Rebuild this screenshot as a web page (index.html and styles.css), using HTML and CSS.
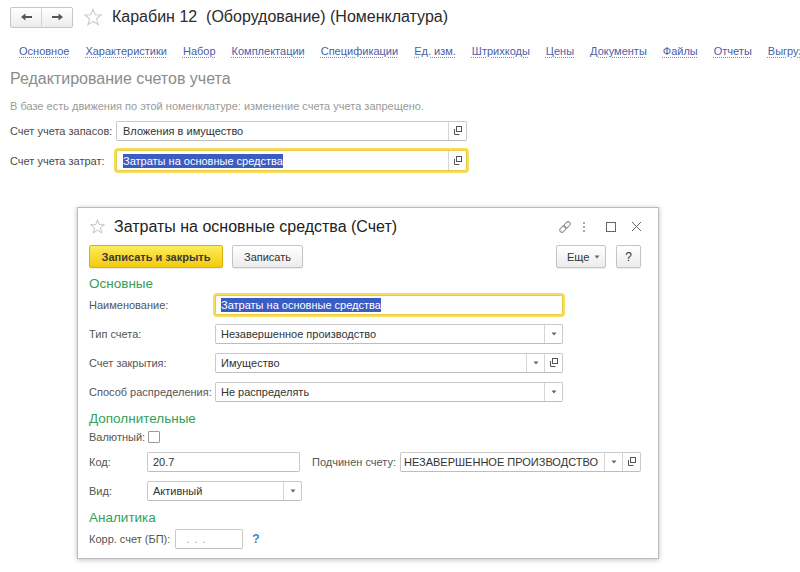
FILE: index.html
```html
<!DOCTYPE html>
<html lang="ru">
<head>
<meta charset="utf-8">
<title>Карабин 12</title>
<link rel="stylesheet" href="styles.css">
</head>
<body>
<div class="page">
  <header class="header">
    <div class="navbtns">
      <span class="navbtn"><svg width="11" height="8" viewBox="0 0 11 8"><path d="M0 4 L4.5 0.5 V3 H11 V5 H4.5 V7.5 Z" fill="#555"/></svg></span>
      <span class="navbtn"><svg width="11" height="8" viewBox="0 0 11 8"><path d="M11 4 L6.5 0.5 V3 H0 V5 H6.5 V7.5 Z" fill="#555"/></svg></span>
    </div>
    <svg class="star big" width="18" height="18" viewBox="0 0 16 16"><polygon points="8,1 9.9,6 15.3,6.2 11.1,9.6 12.6,14.9 8,11.9 3.4,14.9 4.9,9.6 0.7,6.2 6.1,6" fill="none" stroke="#c9c9c9" stroke-width="0.9"/></svg>
    <h1 class="title">Карабин 12&nbsp; (Оборудование) (Номенклатура)</h1>
  </header>

  <nav class="tabs">
    <a>Основное</a><a>Характеристики</a><a>Набор</a><a>Комплектации</a><a>Спецификации</a><a>Ед. изм.</a><a>Штрихкоды</a><a>Цены</a><a>Документы</a><a>Файлы</a><a>Отчеты</a><a>Выгрузка</a>
  </nav>

  <h2 class="section">Редактирование счетов учета</h2>
  <p class="note">В базе есть движения по этой номенклатуре: изменение счета учета запрещено.</p>

  <div class="topform">
    <div class="trow">
      <label class="tlabel">Счет учета запасов:</label>
      <div class="field tfield">
        <span class="val">Вложения в имущество</span>
        <span class="fbtn"><svg class="ico-open" width="10" height="10" viewBox="0 0 10 10"><rect x="3.5" y="0.5" width="5" height="5" fill="none" stroke="#555"/><path d="M1.5 3 V8.5 H6.5" fill="none" stroke="#555"/></svg></span>
      </div>
    </div>
    <div class="trow r2">
      <label class="tlabel">Счет учета затрат:</label>
      <div class="field tfield focus">
        <span class="val"><span class="sel">Затраты на основные средства</span></span>
        <span class="fbtn"><svg class="ico-open" width="10" height="10" viewBox="0 0 10 10"><rect x="3.5" y="0.5" width="5" height="5" fill="none" stroke="#555"/><path d="M1.5 3 V8.5 H6.5" fill="none" stroke="#555"/></svg></span>
      </div>
    </div>
  </div>

  <div class="dialog">
    <div class="dtitle">
      <svg class="star" width="15" height="15" viewBox="0 0 16 16"><polygon points="8,1 9.9,6 15.3,6.2 11.1,9.6 12.6,14.9 8,11.9 3.4,14.9 4.9,9.6 0.7,6.2 6.1,6" fill="none" stroke="#bdbdbd" stroke-width="1"/></svg>
      <span class="dtext">Затраты на основные средства (Счет)</span>
      <div class="wicons">
        <svg width="14" height="14" viewBox="0 0 14 14"><g transform="rotate(-45 7 7)" fill="none" stroke="#8a8a8a" stroke-width="1"><rect x="0.5" y="4.8" width="7" height="4.4" rx="2.2"/><rect x="6.5" y="4.8" width="7" height="4.4" rx="2.2"/></g></svg>
        <svg width="4" height="12" viewBox="0 0 4 12"><circle cx="2" cy="2" r="1" fill="#888"/><circle cx="2" cy="6" r="1" fill="#888"/><circle cx="2" cy="10" r="1" fill="#888"/></svg>
        <svg width="10" height="10" viewBox="0 0 10 10"><rect x="0.5" y="0.5" width="9" height="9" fill="none" stroke="#666"/></svg>
        <svg width="11" height="11" viewBox="0 0 11 11"><path d="M1 1 L10 10 M10 1 L1 10" stroke="#666" stroke-width="1"/></svg>
      </div>
    </div>

    <div class="toolbar">
      <button class="btn primary">Записать и закрыть</button>
      <button class="btn">Записать</button>
      <span class="spacer"></span>
      <button class="btn more">Еще <svg width="6" height="4" viewBox="0 0 6 4"><path d="M0.5 0.5 H5.5 L3 3.5 Z" fill="#666"/></svg></button>
      <button class="btn help">?</button>
    </div>

    <div class="group">Основные</div>
    <div class="drow first">
      <label class="dlabel">Наименование:</label>
      <div class="field dfield focus"><span class="val"><span class="sel">Затраты на основные средства</span></span></div>
    </div>
    <div class="drow">
      <label class="dlabel">Тип счета:</label>
      <div class="field dfield"><span class="val">Незавершенное производство</span><span class="fbtn"><svg width="6" height="4" viewBox="0 0 6 4"><path d="M0.5 0.5 H5.5 L3 3.5 Z" fill="#666"/></svg></span></div>
    </div>
    <div class="drow">
      <label class="dlabel">Счет закрытия:</label>
      <div class="field dfield"><span class="val">Имущество</span><span class="fbtn"><svg width="6" height="4" viewBox="0 0 6 4"><path d="M0.5 0.5 H5.5 L3 3.5 Z" fill="#666"/></svg></span><span class="fbtn"><svg width="10" height="10" viewBox="0 0 10 10"><rect x="3.5" y="0.5" width="5" height="5" fill="none" stroke="#555"/><path d="M1.5 3 V8.5 H6.5" fill="none" stroke="#555"/></svg></span></div>
    </div>
    <div class="drow">
      <label class="dlabel">Способ распределения:</label>
      <div class="field dfield"><span class="val">Не распределять</span><span class="fbtn"><svg width="6" height="4" viewBox="0 0 6 4"><path d="M0.5 0.5 H5.5 L3 3.5 Z" fill="#666"/></svg></span></div>
    </div>

    <div class="group g2">Дополнительные</div>
    <div class="drow check">
      <label class="slabel">Валютный:</label>
      <span class="checkbox"></span>
    </div>
    <div class="drow kod">
      <label class="slabel wide">Код:</label>
      <div class="field kfield"><span class="val">20.7</span></div>
      <label class="sub">Подчинен счету:</label>
      <div class="field pfield"><span class="val caps">НЕЗАВЕРШЕННОЕ ПРОИЗВОДСТВО</span><span class="fbtn"><svg width="6" height="4" viewBox="0 0 6 4"><path d="M0.5 0.5 H5.5 L3 3.5 Z" fill="#666"/></svg></span><span class="fbtn"><svg width="10" height="10" viewBox="0 0 10 10"><rect x="3.5" y="0.5" width="5" height="5" fill="none" stroke="#555"/><path d="M1.5 3 V8.5 H6.5" fill="none" stroke="#555"/></svg></span></div>
    </div>
    <div class="drow">
      <label class="slabel wide">Вид:</label>
      <div class="field vfield"><span class="val">Активный</span><span class="fbtn"><svg width="6" height="4" viewBox="0 0 6 4"><path d="M0.5 0.5 H5.5 L3 3.5 Z" fill="#666"/></svg></span></div>
    </div>

    <div class="group g2">Аналитика</div>
    <div class="drow first">
      <label class="slabel">Корр. счет (БП):</label>
      <div class="field cfield"><span class="val ph">. . .</span></div>
      <span class="q">?</span>
    </div>
  </div>
</div>
</body>
</html>
```

FILE: styles.css
```css
* { box-sizing: border-box; }
html, body { margin: 0; padding: 0; background: #fff; }
body {
  font-family: "Liberation Sans", Arial, sans-serif;
  font-size: 11px;
  color: #333;
}
.page { position: relative; width: 800px; height: 572px; overflow: hidden; }

.header { height: 34px; display: flex; align-items: center; padding-left: 10px; }
.navbtns {
  display: flex; height: 21px; width: 63px;
  border: 1px solid #c6c6c6; border-radius: 2px;
  background: linear-gradient(#fff, #ececec);
}
.navbtn { flex: 1; display: flex; align-items: center; justify-content: center; }
.navbtn + .navbtn { border-left: 1px solid #d4d4d4; }
.star.big { margin-left: 11px; }
.title { margin: 0 0 0 10px; font-size: 16px; font-weight: normal; color: #2b2b2b; letter-spacing: 0; }

.tabs { display: flex; gap: 16px; margin-top: 10px; padding-left: 19px; white-space: nowrap; height: 14px; line-height: 14px; overflow: hidden; }
.tabs a { color: #4a5ea8; text-decoration: underline dotted #7d8cc0; text-underline-offset: 2px; flex: none; }

.section { margin: 12px 0 0 10px; font-size: 16px; line-height: 18px; font-weight: normal; color: #8c8c8c; }
.note { margin: 11px 0 0 10px; line-height: 14px; color: #9a9a9a; }

.topform { margin-top: 8px; padding-left: 10px; }
.trow { display: flex; align-items: center; height: 20px; }
.trow.r2 { margin-top: 9px; height: 21px; }
.tlabel { width: 106px; color: #4a4a4a; }

.field {
  display: flex; align-items: stretch; height: 100%;
  border: 1px solid #c9c9c9; border-bottom-color: #bdbdbd; border-radius: 2px; background: #fff;
}
.field .val { flex: 1; padding-left: 5px; display: flex; align-items: center; color: #333; white-space: nowrap; overflow: hidden; }
.field .fbtn { width: 18px; border-left: 1px solid #d6d6d6; display: flex; align-items: center; justify-content: center; flex: none; }
.field.focus { border-color: #eacb45; box-shadow: 0 0 0 2px #f6dc59; }
.sel { background: #3b5cc2; color: #fff; padding: 1px 0; }
.tfield { width: 351px; }
.tfield .val { padding-left: 6px; }

.dialog {
  position: absolute; left: 77px; top: 207px; width: 582px; height: 352px;
  background: #fff; border: 1px solid #bcbcbc;
  box-shadow: 0 1px 5px rgba(0,0,0,0.25);
  padding: 0 17px 0 11px;
}
.dtitle { height: 37px; display: flex; align-items: center; }
.dtitle .star { margin-left: 1px; }
.dtext { margin-left: 9px; font-size: 16px; color: #222; }
.wicons { margin-left: auto; display: flex; align-items: center; gap: 0; }
.wicons svg:nth-child(1) { margin-right: 10px; }
.wicons svg:nth-child(2) { margin-right: 20px; }
.wicons svg:nth-child(3) { margin-right: 15px; }
.wicons svg:nth-child(4) { margin-right: -1px; }

.toolbar { display: flex; align-items: center; height: 23px; gap: 9px; }
.btn {
  font-family: inherit; font-size: 11px; color: #333; height: 23px;
  border: 1px solid #c4c4c4; border-radius: 2px; background: linear-gradient(#fff, #ececec);
  padding: 0 12px; display: flex; align-items: center; gap: 5px; cursor: default;
  box-shadow: 0 1px 1px rgba(0,0,0,0.08); white-space: nowrap;
}
.btn.primary {
  width: 134px; justify-content: center; font-weight: bold; color: #3a3a3a; padding: 0;
  background: linear-gradient(#fdec5c, #f2cb0c); border-color: #d8b406;
}
.btn:nth-child(2) { width: 71px; justify-content: center; padding: 0; }
.spacer { flex: 1; }
.btn.more { width: 50px; padding: 0 0 0 10px; }
.btn.help { width: 25px; justify-content: center; padding: 0; font-size: 12px; margin-left: 1px; }

.group { margin-top: 8px; height: 16px; line-height: 16px; font-size: 13.5px; color: #34a05b; }
.group.g2 { margin-top: 9px; }

.drow { display: flex; align-items: center; height: 20px; margin-top: 9px; }
.drow.first { margin-top: 3px; }
.dlabel { width: 126px; color: #555; white-space: nowrap; flex: none; }
.dfield { width: 348px; }
.slabel { color: #555; white-space: nowrap; flex: none; }
.slabel.wide { width: 58px; }
.drow.check { height: 14px; margin-top: 3px; }
.drow.check .slabel { width: 59px; }
.checkbox { width: 12px; height: 12px; border: 1px solid #9a9a9a; background: #fff; border-radius: 1px; }
.drow.kod { margin-top: 8px; }
.kfield { width: 153px; }
.sub { margin-left: 12px; width: 88px; color: #555; white-space: nowrap; flex: none; }
.pfield { width: 241px; }
.pfield .val { padding-left: 3px; font-size: 11px; }
.vfield { width: 155px; }
.cfield { width: 68px; margin-left: 5px; }
.val.ph { color: #999; padding-left: 10px; letter-spacing: 1px; }
.q { margin-left: 9px; color: #3b82c4; font-weight: bold; font-size: 12px; }
```
